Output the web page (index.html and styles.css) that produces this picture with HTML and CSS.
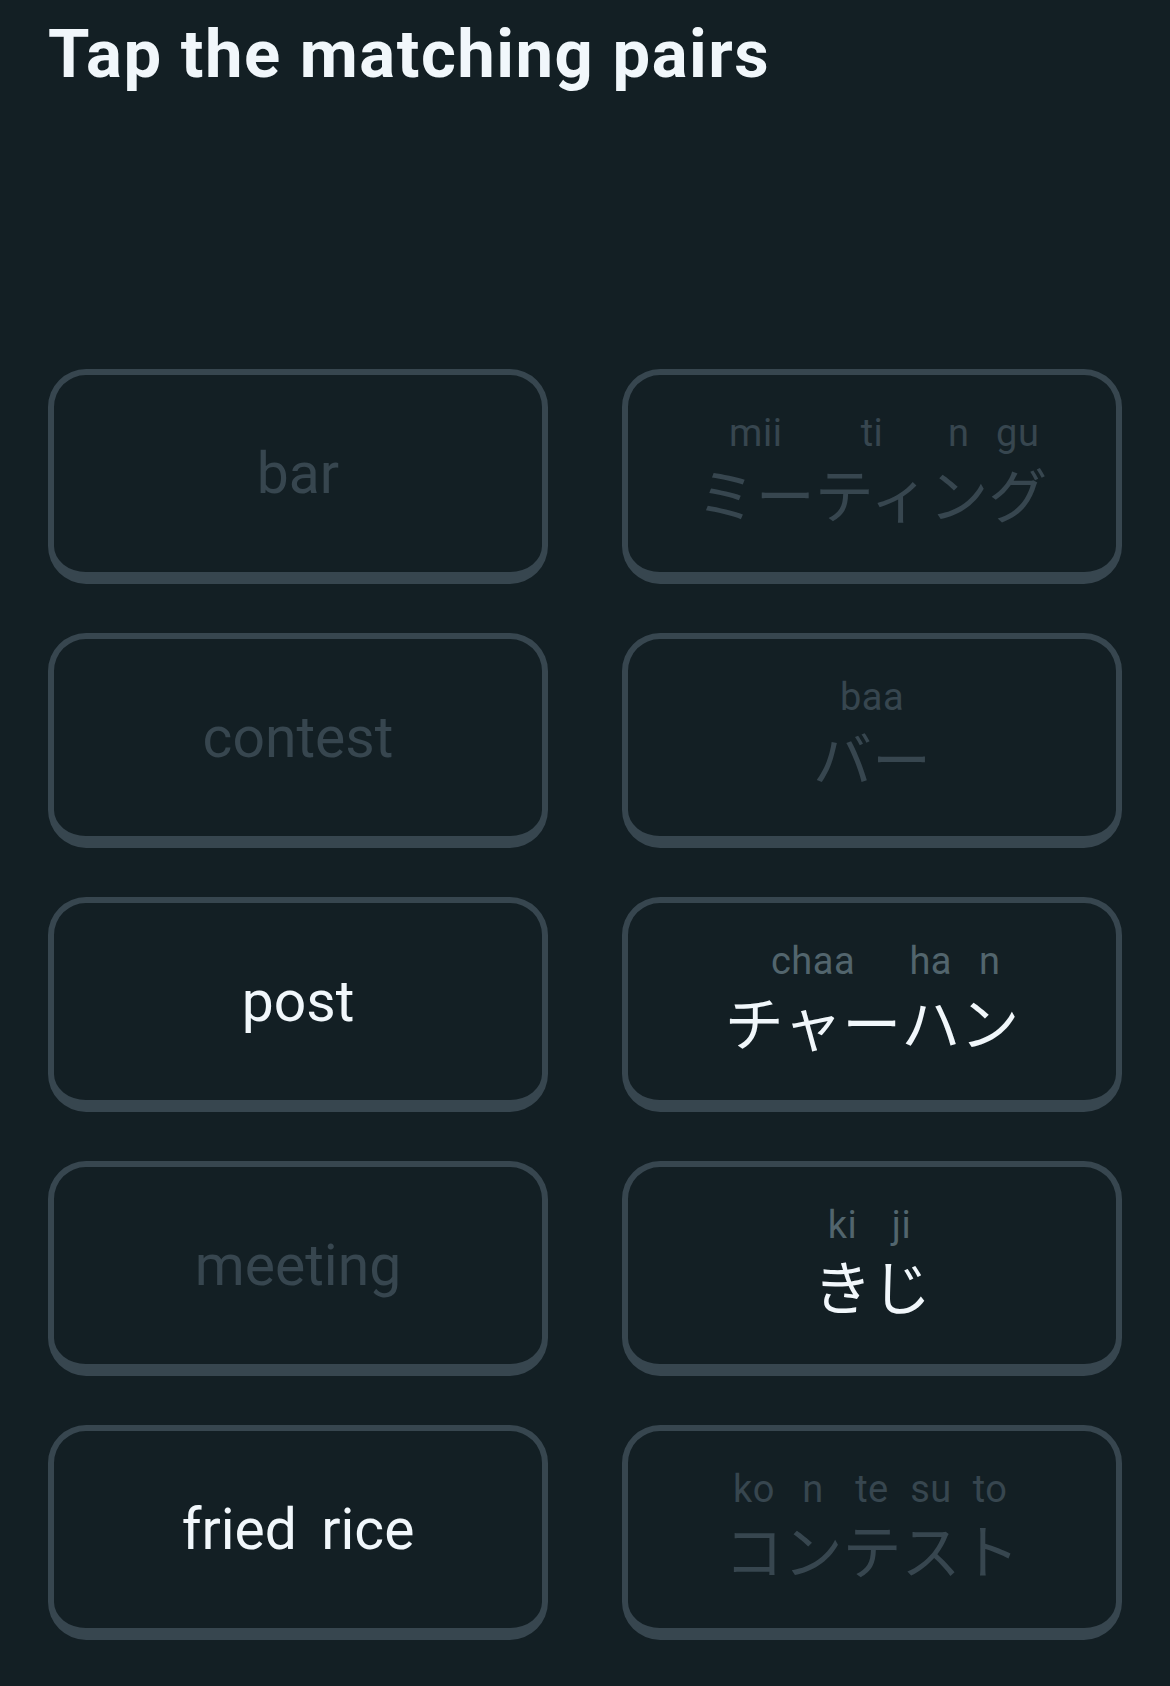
FILE: index.html
```html
<!DOCTYPE html>
<html lang="en">
<head>
    <meta charset="UTF-8">
    <meta name="viewport" content="width=device-width, initial-scale=1.0">
    <title>Tap the matching pairs</title>
    <link rel="stylesheet" href="styles.css">
</head>
<body>

    <main class="screen">
        <h1 class="prompt">Tap the matching pairs</h1>

        <div class="pairs">
            <div class="tile done"><span class="word">bar</span></div>
            <div class="tile done">
                <span class="jp">
                    <span class="seg"><span class="rt">mii</span><span class="kana">ミー</span></span>
                    <span class="seg"><span class="rt">ti</span><span class="kana">ティ</span></span>
                    <span class="seg"><span class="rt">n</span><span class="kana">ン</span></span>
                    <span class="seg"><span class="rt">gu</span><span class="kana">グ</span></span>
                </span>
            </div>

            <div class="tile done"><span class="word">contest</span></div>
            <div class="tile done">
                <span class="jp">
                    <span class="seg"><span class="rt">baa</span><span class="kana">バー</span></span>
                </span>
            </div>

            <div class="tile"><span class="word">post</span></div>
            <div class="tile">
                <span class="jp">
                    <span class="seg"><span class="rt">chaa</span><span class="kana">チャー</span></span>
                    <span class="seg"><span class="rt">ha</span><span class="kana">ハ</span></span>
                    <span class="seg"><span class="rt">n</span><span class="kana">ン</span></span>
                </span>
            </div>

            <div class="tile done"><span class="word">meeting</span></div>
            <div class="tile">
                <span class="jp">
                    <span class="seg"><span class="rt">ki</span><span class="kana">き</span></span>
                    <span class="seg"><span class="rt">ji</span><span class="kana">じ</span></span>
                </span>
            </div>

            <div class="tile"><span class="word">fried rice</span></div>
            <div class="tile done">
                <span class="jp">
                    <span class="seg"><span class="rt">ko</span><span class="kana">コ</span></span>
                    <span class="seg"><span class="rt">n</span><span class="kana">ン</span></span>
                    <span class="seg"><span class="rt">te</span><span class="kana">テ</span></span>
                    <span class="seg"><span class="rt">su</span><span class="kana">ス</span></span>
                    <span class="seg"><span class="rt">to</span><span class="kana">ト</span></span>
                </span>
            </div>
        </div>
    </main>

</body>
</html>
```

FILE: styles.css
```css
body {
    margin: 0;
    background-color: #131f24;
    font-family: Roboto, "Noto Sans", sans-serif;
    color: #f1f7fb;
}
.screen {
    padding: 16px 48px 0;
}
.prompt {
    margin: 0;
    font-size: 67px;
    line-height: 76px;
    font-weight: 700;
    letter-spacing: 1.5px;
}
.pairs {
    display: grid;
    grid-template-columns: repeat(2, 500px);
    column-gap: 74px;
    row-gap: 49px;
    margin-top: 277px;
}
/* 卡片 */
.tile {
    box-sizing: border-box;
    height: 215px;
    border: 6px solid #37464f;
    border-bottom-width: 12px;
    border-radius: 38px;
    display: flex;
    align-items: center;
    justify-content: center;
}
.tile.done {
    color: #37464f;
}
.word {
    font-size: 57px;
    line-height: 67px;
    word-spacing: 10px;
}
/* 假名 + 注音 */
.jp {
    display: flex;
    padding-bottom: 6px;
}
.seg {
    display: flex;
    flex-direction: column;
    align-items: center;
}
.rt {
    font-size: 38px;
    line-height: 38px;
    letter-spacing: 0.5px;
    color: #52656d;
    margin-bottom: 16px;
}
.done .rt {
    color: #37464f;
}
.kana {
    font-family: Roboto, "Noto Sans CJK JP", sans-serif;
    font-size: 59px;
    line-height: 59px;
}
```
